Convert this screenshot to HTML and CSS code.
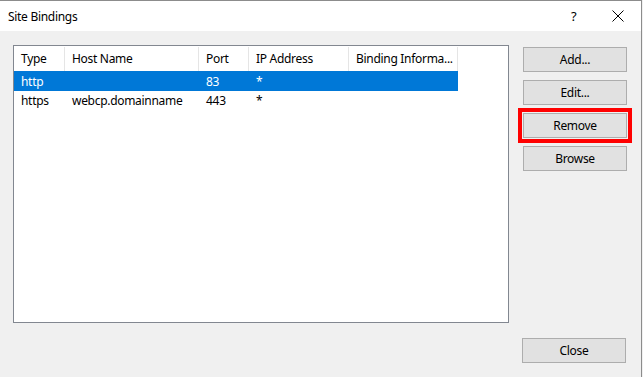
FILE: index.html
```html
<!DOCTYPE html>
<html lang="en">

<head>
    <meta charset="UTF-8">
    <meta name="viewport" content="width=device-width, initial-scale=1.0">
    <title>Site Bindings</title>
    <link rel="stylesheet" href="styles.css">
</head>

<body>
    <div class="window">
        <div class="titlebar">
            <span class="title">Site Bindings</span>
            <span class="help">?</span>
            <span class="close-x">
                <svg width="12" height="12" viewBox="0 0 12 12"><path d="M0.5 0.5 L11.5 11.5 M11.5 0.5 L0.5 11.5" stroke="#000" stroke-width="1" fill="none"/></svg>
            </span>
        </div>
        <div class="content">
            <div class="top">
                <div class="list">
                    <div class="row head">
                        <div class="cell c-type">Type</div>
                        <div class="cell c-host">Host Name</div>
                        <div class="cell c-port">Port</div>
                        <div class="cell c-ip">IP Address</div>
                        <div class="cell c-info">Binding Informa...</div>
                    </div>
                    <div class="row selected">
                        <div class="cell c-type">http</div>
                        <div class="cell c-host"></div>
                        <div class="cell c-port">83</div>
                        <div class="cell c-ip">*</div>
                        <div class="cell c-info"></div>
                    </div>
                    <div class="row">
                        <div class="cell c-type">https</div>
                        <div class="cell c-host">webcp.domainname</div>
                        <div class="cell c-port">443</div>
                        <div class="cell c-ip">*</div>
                        <div class="cell c-info"></div>
                    </div>
                </div>
                <div class="buttons">
                    <button>Add...</button>
                    <button>Edit...</button>
                    <button class="marked">Remove</button>
                    <button>Browse</button>
                </div>
            </div>
            <div class="bottom">
                <button>Close</button>
            </div>
        </div>
    </div>
</body>

</html>
```

FILE: styles.css
```css
*{
    box-sizing: border-box;
}
body{
    margin:0;
    background:#f0f0f0;
    font-family:"Noto Sans", "Liberation Sans", sans-serif;
    font-size:12px;
    letter-spacing:-0.3px;
    color:#000;
}
.window{
    width:642px;
    height:377px;
    border-top:1px solid #8c8c8c;
    border-right:1px solid #8c8c8c;
    background:#f0f0f0;
}
.titlebar{
    height:30px;
    background:#fff;
    display:flex;
    align-items:center;
    padding-left:8px;
}
.title{
    flex:1;
}
.help{
    width:14px;
    margin-right:27px;
    font-size:13px;
}
.close-x{
    width:12px;
    height:12px;
    margin-right:17px;
    display:flex;
}
.content{
    padding:14px 0 0 13px;
}
.top{
    display:flex;
    gap:14px;
}
.list{
    width:496px;
    height:278px;
    border:1px solid #828790;
    background:#fff;
}
.row{
    display:flex;
    height:19px;
    align-items:center;
    width:444px;
}
.row.head{
    height:25px;
    padding-top:1px;
}
.row.selected{
    background:#0078d7;
    color:#fff;
    height:20px;
}
.cell{
    padding-left:7px;
    white-space:nowrap;
    overflow:hidden;
}
.head .cell{
    height:24px;
    line-height:24px;
    border-right:1px solid #e5e5e5;
}
.c-type{ width:51px; }
.c-host{ width:134px; }
.c-port{ width:50px; }
.c-ip{ width:100px; }
.c-info{ width:109px; }
.buttons{
    display:flex;
    flex-direction:column;
    gap:8px;
    padding-top:2px;
}
button{
    width:104px;
    height:25px;
    background:#e1e1e1;
    border:1px solid #adadad;
    font-family:"Noto Sans", "Liberation Sans", sans-serif;
    font-size:12px;
    letter-spacing:-0.3px;
    color:#000;
    padding:0;
}
.marked{
    outline:4px solid #ff0000;
    outline-offset:1px;
}
.bottom{
    display:flex;
    justify-content:flex-end;
    padding-right:15px;
    margin-top:15px;
}
```
